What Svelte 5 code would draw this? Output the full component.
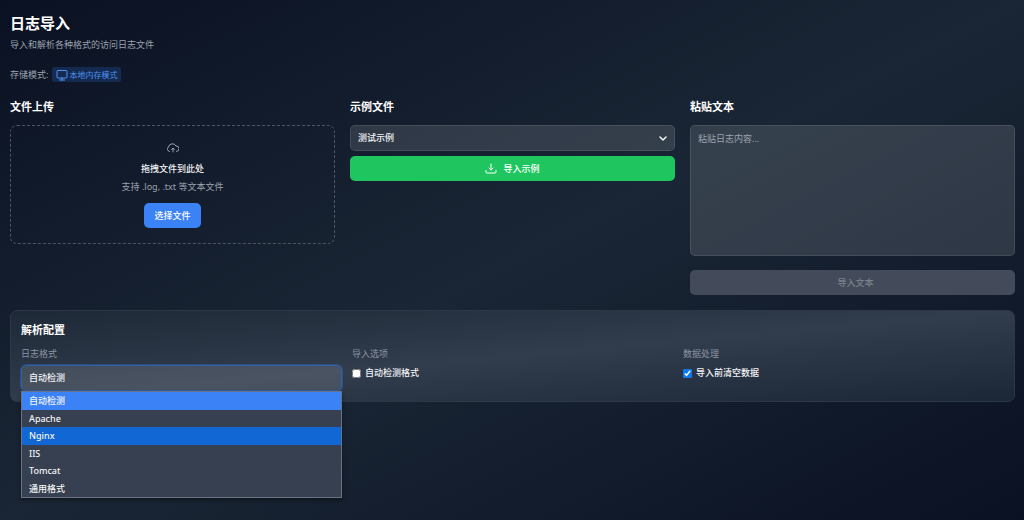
<script lang="ts">
  const formats = ['自动检测', 'Apache', 'Nginx', 'IIS', 'Tomcat', '通用格式'];

  let format = $state('自动检测');
  let hovered = $state('Nginx');
  let menuOpen = $state(true);
  let pasted = $state('');
  let autoDetect = $state(false);
  let clearFirst = $state(true);

  function pick(name: string) {
    format = name;
    menuOpen = false;
  }

  function toggleMenu(e: Event) {
    e.preventDefault();
    menuOpen = !menuOpen;
  }
</script>

<main class="page">
  <header>
    <h1>日志导入</h1>
    <p class="subtitle">导入和解析各种格式的访问日志文件</p>
    <div class="mode">
      <span>存储模式:</span>
      <span class="badge">
        <svg viewBox="0 0 24 24" width="12" height="12" aria-hidden="true">
          <rect x="2" y="3" width="20" height="15" rx="2" />
          <path d="M12 18v4M7 22h10" />
        </svg>
        本地内存模式
      </span>
    </div>
  </header>

  <div class="sources">
    <section>
      <h2>文件上传</h2>
      <div class="dropzone">
        <svg viewBox="0 0 24 24" width="12" height="12" aria-hidden="true">
          <path d="M5 19a5 5 0 0 1-2-9 8 8 0 0 1 15-2 5 5 0 0 1 1 11" />
          <path d="M12 20v-7M9 15l3-3 3 3" />
        </svg>
        <p class="drop-title">拖拽文件到此处</p>
        <p class="drop-hint">支持 .log, .txt 等文本文件</p>
        <button class="btn blue">选择文件</button>
      </div>
    </section>

    <section>
      <h2>示例文件</h2>
      <div class="select-wrap">
        <select class="field" aria-label="示例文件">
          <option>测试示例</option>
        </select>
        <svg class="chevron" viewBox="0 0 10 10" width="10" height="10" aria-hidden="true">
          <path d="M2 4l3 3 3-3" />
        </svg>
      </div>
      <button class="btn green">
        <svg viewBox="0 0 24 24" width="12" height="12" aria-hidden="true">
          <path d="M12 2v12M8 10l4 4 4-4M2 15v3a2 2 0 0 0 2 2h16a2 2 0 0 0 2-2v-3" />
        </svg>
        导入示例
      </button>
    </section>

    <section>
      <h2>粘贴文本</h2>
      <textarea class="field" aria-label="粘贴文本" placeholder="粘贴日志内容..." bind:value={pasted}></textarea>
      <button class="btn gray" disabled={!pasted.trim()}>导入文本</button>
    </section>
  </div>

  <section class="config">
    <h2>解析配置</h2>
    <div class="options">
      <div>
        <label class="caption" for="format">日志格式</label>
        <div class="select-wrap">
          <select id="format" class="field focused" bind:value={format} onmousedown={toggleMenu}>
            {#each formats as name}
              <option>{name}</option>
            {/each}
          </select>
          {#if menuOpen}
            <div class="menu">
              {#each formats as name}
                <button
                  class:selected={name === format}
                  class:hovered={name === hovered}
                  onmouseenter={() => (hovered = name)}
                  onclick={() => pick(name)}
                >{name}</button>
              {/each}
            </div>
          {/if}
        </div>
      </div>

      <div>
        <p class="caption">导入选项</p>
        <label class="check">
          <input type="checkbox" bind:checked={autoDetect} />
          自动检测格式
        </label>
      </div>

      <div>
        <p class="caption">数据处理</p>
        <label class="check">
          <input type="checkbox" bind:checked={clearFirst} />
          导入前清空数据
        </label>
      </div>
    </div>
  </section>
</main>

<style>
  :global(body) {
    margin: 0;
    background: #0b1222;
  }

  .page {
    box-sizing: border-box;
    min-height: 100vh;
    padding: 13px 9px 14px 10px;
    background: linear-gradient(to bottom right, #0a1122 0%, #1a2635 50%, #0a1122 100%);
    color: #f3f4f6;
    font-family: "Noto Sans", "Noto Sans CJK SC", sans-serif;
    font-size: 9px;
    line-height: 14px;
  }

  h1, h2, p {
    margin: 0;
  }

  h1 {
    font-size: 15px;
    line-height: 20px;
    color: #fff;
  }

  h2 {
    margin-bottom: 10px;
    font-size: 11px;
    line-height: 16px;
    color: #fff;
  }

  svg {
    fill: none;
    stroke: currentColor;
    stroke-width: 2;
    stroke-linecap: round;
    stroke-linejoin: round;
  }

  button, select, textarea {
    box-sizing: border-box;
    font: inherit;
    color: inherit;
  }

  .subtitle {
    margin-top: 5px;
    color: #9ca3af;
  }

  .mode {
    display: flex;
    align-items: center;
    gap: 4px;
    margin: 15px 0 17px;
    color: #9ca3af;
  }

  .badge {
    display: inline-flex;
    align-items: center;
    gap: 1px;
    height: 15px;
    padding: 0 4px;
    border-radius: 2px;
    background: #142a50;
    color: #4e94ee;
    font-size: 8px;
  }

  /* ── import sources ── */
  .sources {
    display: grid;
    grid-template-columns: repeat(3, 1fr);
    gap: 15px;
  }

  .dropzone {
    display: flex;
    flex-direction: column;
    align-items: center;
    padding: 16px 10px 15px;
    border: 1px dashed #4b5563;
    border-radius: 7px;
    color: #9ca3af;
  }

  .drop-title {
    margin-top: 8px;
    color: #f3f4f6;
    font-weight: 500;
  }

  .drop-hint {
    margin: 4px 0 9px;
  }

  .btn {
    display: flex;
    align-items: center;
    justify-content: center;
    gap: 6px;
    height: 25px;
    padding: 0 10px;
    border: none;
    border-radius: 5px;
    color: #fff;
    font-weight: 500;
    cursor: pointer;
  }

  .blue {
    background: #3b82f6;
  }

  .green {
    width: 100%;
    margin-top: 5px;
    background: #1fc660;
  }

  .gray {
    width: 100%;
    margin-top: 14px;
    padding-left: 16px;
    background: #434b5a;
    color: #7b828e;
    cursor: not-allowed;
  }

  .field {
    display: block;
    width: 100%;
    height: 26px;
    padding: 0 7px;
    border: 1px solid rgba(255, 255, 255, .1);
    border-radius: 5px;
    outline: none;
    background: rgba(255, 255, 255, .12);
    appearance: none;
    font-weight: 500;
  }

  .field option {
    background: #374151;
  }

  textarea.field {
    height: 131px;
    padding: 6px 7px;
    resize: none;
    font-weight: 400;
  }

  textarea::placeholder {
    color: #9ca3af;
  }

  .select-wrap {
    position: relative;
  }

  .chevron {
    position: absolute;
    top: 8px;
    right: 7px;
    pointer-events: none;
  }

  .chevron path {
    stroke-width: 1.5;
  }

  /* ── parser settings ── */
  .config {
    margin-top: 15px;
    padding: 11px 10px 10px;
    border: 1px solid #2d3847;
    border-radius: 7px;
    background: linear-gradient(to bottom right, #1d2937 0%, #313c4c 50%, #1b2636 100%);
  }

  .config h2 {
    margin-bottom: 9px;
  }

  .options {
    display: grid;
    grid-template-columns: repeat(3, 1fr);
    gap: 10px;
  }

  .caption {
    display: block;
    margin-bottom: 4px;
    color: #8d95a2;
  }

  .focused {
    border-color: #315fa9;
    box-shadow: 0 0 0 1px rgba(59, 130, 246, .3);
  }

  .menu {
    position: absolute;
    z-index: 1;
    top: 100%;
    left: 0;
    right: 0;
    box-sizing: border-box;
    display: grid;
    grid-auto-rows: 1fr;
    min-height: 107px;
    border: 1px solid #6b7280;
    background: #364050;
    box-shadow: 0 2px 4px rgba(0, 0, 0, .4);
  }

  .menu button {
    padding: 1px 7px 0;
    border: none;
    background: none;
    text-align: left;
    font-weight: 500;
  }

  .menu .hovered {
    background: #1167d3;
  }

  .menu .selected {
    background: #3b82f6;
  }

  .check {
    display: flex;
    align-items: center;
    gap: 4px;
    margin-top: 5px;
    font-weight: 500;
  }

  .check input {
    width: 9px;
    height: 9px;
    margin: 0;
    accent-color: #0a78f0;
  }
</style>
